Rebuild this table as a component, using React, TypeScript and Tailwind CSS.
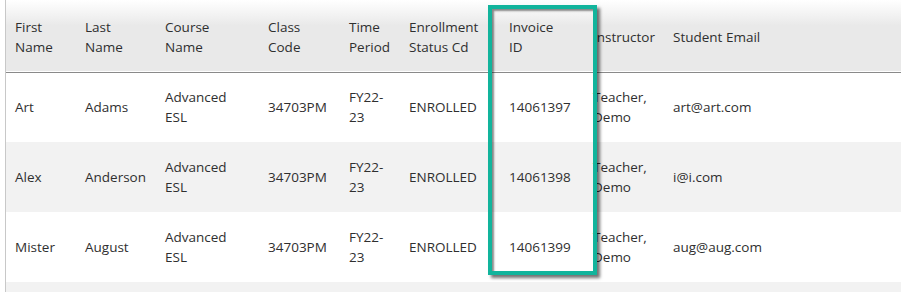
const cols = [
  { key: "first", label: ["First", "Name"], w: "w-[70px]" },
  { key: "last", label: ["Last", "Name"], w: "w-[80px]" },
  { key: "course", label: ["Course", "Name"], w: "w-[103px]" },
  { key: "code", label: ["Class", "Code"], w: "w-[81px]" },
  { key: "period", label: ["Time", "Period"], w: "w-[60px]" },
  { key: "status", label: ["Enrollment", "Status Cd"], w: "w-[100px]" },
  { key: "invoice", label: ["Invoice", "ID"], w: "w-[84px]" },
  { key: "instructor", label: ["Instructor"], w: "w-[80px]" },
  { key: "email", label: ["Student Email"], w: "" },
];

const rows = [
  { first: "Art", last: "Adams", course: ["Advanced", "ESL"], code: "34703PM", period: ["FY22-", "23"], status: "ENROLLED", invoice: "14061397", instructor: ["Teacher,", "Demo"], email: "art@art.com" },
  { first: "Alex", last: "Anderson", course: ["Advanced", "ESL"], code: "34703PM", period: ["FY22-", "23"], status: "ENROLLED", invoice: "14061398", instructor: ["Teacher,", "Demo"], email: "i@i.com" },
  { first: "Mister", last: "August", course: ["Advanced", "ESL"], code: "34703PM", period: ["FY22-", "23"], status: "ENROLLED", invoice: "14061399", instructor: ["Teacher,", "Demo"], email: "aug@aug.com" },
];

function Lines({ v }: { v: string | string[] }) {
  const arr = Array.isArray(v) ? v : [v];
  return (
    <>
      {arr.map((l, i) => (
        <div key={i} className="whitespace-nowrap">{l}</div>
      ))}
    </>
  );
}

export default function App() {
  return (
    <div className="relative w-[901px] h-[292px] overflow-hidden bg-white font-['Open_Sans',sans-serif] text-[13.5px] leading-[20px] text-[#2f2f2f]">
      <div className="ml-[5px] border-l border-[#c8c8c8] h-full">
        <table className="w-full border-collapse table-fixed">
          <thead>
            <tr className="h-[72px] bg-[linear-gradient(to_bottom,#ffffff_0%,#e9e9e9_36%,#e9e9e9_100%)] border-b border-[#8a8a8a]">
              {cols.map((c) => (
                <th key={c.key} className={`${c.w} pl-[9px] pt-[2px] text-left font-normal align-middle`}>
                  <Lines v={c.label} />
                </th>
              ))}
            </tr>
          </thead>
          <tbody>
            {rows.map((r, i) => (
              <tr key={i} className={`h-[70px] ${i % 2 === 1 ? "bg-[#f2f2f2]" : "bg-white"}`}>
                {cols.map((c) => (
                  <td key={c.key} className="pl-[9px] align-middle">
                    <Lines v={(r as Record<string, string | string[]>)[c.key]} />
                  </td>
                ))}
              </tr>
            ))}
            <tr className="h-[70px] bg-[#f2f2f2]">
              <td colSpan={9}></td>
            </tr>
          </tbody>
        </table>
      </div>
      <div className="absolute left-[488px] top-[5px] w-[109px] h-[270px] border-4 border-[#12b49c] shadow-[3px_3px_3px_rgba(0,0,0,0.55),inset_2px_2px_2px_rgba(0,0,0,0.45)]" />
    </div>
  );
}
